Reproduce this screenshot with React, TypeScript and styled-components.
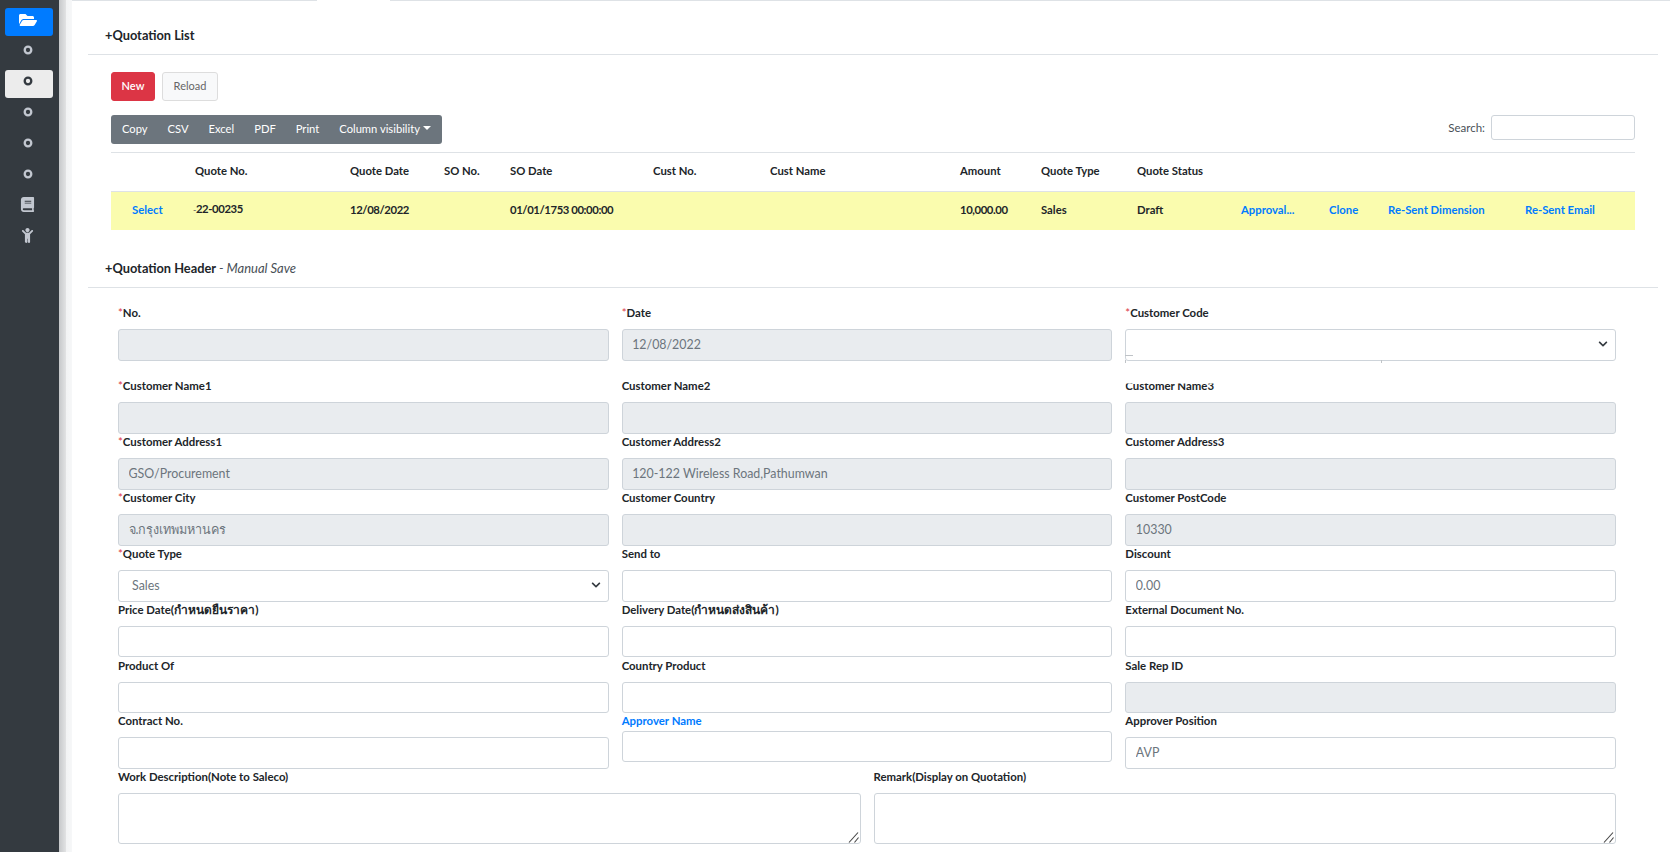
import React, { FC } from 'react';
import styled, { createGlobalStyle } from 'styled-components';
import { FaFolderOpen, FaBook, FaChild, FaChevronDown } from 'react-icons/fa';

const Global = createGlobalStyle`
  html, body {
    margin: 0;
    height: 100%;
    overflow: hidden;
    background: #fff;
    font-family: Lato, "Noto Sans", sans-serif;
    font-size: 12px;
    color: #212529;
  }
  * { box-sizing: border-box; }
`;

const Shell = styled.div`
  display: flex;
  height: 852px;
`;

const Sidebar = styled.nav`
  width: 59px;
  flex: none;
  background: #343a40;
  padding: 8px 6px 0 5px;
  display: flex;
  flex-direction: column;
  gap: 3px;
`;

const NavItem = styled.div<{ $state?: 'open' | 'active' }>`
  height: 28px;
  border-radius: 3px;
  padding: ${(p) => (p.$state === 'open' ? '3px' : '6px')} 3px 0 0;
  display: flex;
  justify-content: center;
  font-size: ${(p) => (p.$state === 'open' ? '18px' : '10px')};
  background: ${(p) =>
    p.$state === 'open' ? '#007bff' : p.$state === 'active' ? '#ececec' : 'transparent'};
  color: ${(p) =>
    p.$state === 'open' ? '#fff' : p.$state === 'active' ? '#343a40' : '#c2c7d0'};
`;

const BigIcon = styled.span`
  font-size: 15px;
  margin-top: -3px;
  line-height: 1;
`;

const RingIcon = styled.svg`
  width: 10px;
  height: 10px;
  fill: none;
  stroke: currentColor;
  stroke-width: 2.3;
`;

const Gutter = styled.div`
  width: 13px;
  flex: none;
  background: linear-gradient(to right, #c6c8ca 0, #e2e3e4 7px, #f2f3f4 7px, #f6f7f8 100%);
`;

const Main = styled.main`
  flex: 1;
  min-width: 0;
  padding-right: 12px;
`;

const TabLine = styled.div`
  display: flex;
  height: 1px;
  margin-right: -12px;
`;

const TabEdge = styled.div<{ $w?: number }>`
  background: #dee2e6;
  width: ${(p) => (p.$w ? `${p.$w}px` : 'auto')};
  flex: ${(p) => (p.$w ? 'none' : '1')};
`;

const TabGap = styled.div`
  width: 73px;
`;

const Section = styled.section`
  margin-left: 16px;
`;

const Heading = styled.h3<{ $after?: boolean }>`
  margin: ${(p) => (p.$after ? '4px' : '0')} 0 0;
  height: 54px;
  padding: 24px 0 0 17px;
  font-size: 12.8px;
  line-height: 20px;
  font-weight: 700;
  color: #212529;
  border-bottom: 1px solid #dee2e6;

  em {
    font-weight: 400;
    font-size: 13px;
    color: #495057;
  }
`;

const ListBody = styled.div`
  padding: 17px 23px 0;
`;

const ButtonRow = styled.div`
  display: flex;
  gap: 7px;
  margin-bottom: 14px;
`;

const Button = styled.button<{ $kind: 'danger' | 'light' }>`
  height: 29px;
  width: ${(p) => (p.$kind === 'danger' ? 44 : 56)}px;
  padding: 0 0 2px;
  border-radius: 3px;
  font: inherit;
  font-size: 11px;
  font-weight: ${(p) => (p.$kind === 'danger' ? 600 : 400)};
  border: 1px solid ${(p) => (p.$kind === 'danger' ? '#dc3545' : '#ddd')};
  background: ${(p) => (p.$kind === 'danger' ? '#dc3545' : '#f8f9fa')};
  color: ${(p) => (p.$kind === 'danger' ? '#fff' : '#666')};
`;

const Toolbar = styled.div`
  display: flex;
  justify-content: space-between;
  align-items: flex-start;
  height: 37px;
`;

const ExportGroup = styled.div`
  display: flex;
  height: 29px;
  border-radius: 3px;
  background: #6c757d;
  padding: 0 1px;
`;

const ExportButton = styled.button`
  border: 0;
  background: none;
  color: #fff;
  font: inherit;
  font-size: 11.2px;
  padding: 0 10px 2px;
  white-space: nowrap;
  display: flex;
  align-items: center;
  gap: 3px;
`;

const Caret = styled.span`
  border-top: 4px solid #fff;
  border-left: 4px solid transparent;
  border-right: 4px solid transparent;
  margin-top: -2px;
`;

const SearchBox = styled.label`
  display: flex;
  align-items: center;
  gap: 6px;
  color: #495057;
  font-size: 11.5px;
`;

const SearchInput = styled.input`
  width: 144px;
  height: 25px;
  border: 1px solid #ced4da;
  border-radius: 3px;
  background: #fff;
`;

const Table = styled.table`
  width: 100%;
  table-layout: fixed;
  border-collapse: collapse;
  border-top: 1px solid #dee2e6;
`;

const HeadCell = styled.th`
  height: 39px;
  padding: 0 0 3px;
  text-align: left;
  font-size: 11.3px;
  font-weight: 700;
  border-bottom: 1px solid #dee2e6;
  white-space: nowrap;
`;

const BodyRow = styled.tr`
  background: #fafcae;
`;

const Cell = styled.td<{ $link?: boolean; $pad?: number; $raise?: boolean; $num?: boolean }>`
  height: 38px;
  padding: 0 0 ${(p) => (p.$raise ? '5px' : '2px')} ${(p) => p.$pad ?? 0}px;
  font-size: 11.3px;
  font-weight: 700;
  white-space: nowrap;
  letter-spacing: ${(p) => (p.$num ? '-0.4px' : '0')};
  color: ${(p) => (p.$link ? '#007bff' : '#212529')};
`;

const Dash = styled.span`
  margin-left: -2px;
  color: #555;
  font-size: 9px;
  font-weight: 400;
`;

const Form = styled.div`
  padding: 17px 42px 0 30px;
  display: flex;
  flex-direction: column;
`;

const Row = styled.div<{ $h?: number; $gap?: number; $two?: boolean }>`
  display: grid;
  grid-template-columns: ${(p) => (p.$two ? '1fr 1fr' : 'repeat(3, 1fr)')};
  column-gap: 13px;
  height: ${(p) => p.$h ?? 56}px;
  margin-bottom: ${(p) => p.$gap ?? 0}px;
`;

const Field = styled.div`
  min-width: 0;
`;

const Label = styled.label<{ $tight?: boolean; $clip?: boolean; $blue?: boolean }>`
  display: block;
  height: 16px;
  line-height: 16px;
  margin-bottom: ${(p) => (p.$tight ? '2px' : '8px')};
  font-size: 11.4px;
  font-weight: 700;
  white-space: nowrap;
  color: ${(p) => (p.$blue ? '#007bff' : '#212529')};
  clip-path: ${(p) => (p.$clip ? 'inset(6px 0 0 0)' : 'none')};
`;

const ThaiText = styled.span`
  font-size: 12px;
`;

const Required = styled.span`
  color: #dc3545;
  font-weight: 400;
`;

const Input = styled.input<{ $short?: boolean; $off?: boolean; $thai?: boolean }>`
  display: block;
  width: 100%;
  height: ${(p) => (p.$short ? 31 : 32)}px;
  padding: 0 9.5px;
  border: 1px solid #ced4da;
  border-radius: 3px;
  font: inherit;
  font-size: ${(p) => (p.$thai ? 12.6 : 12.4)}px;
  color: #6c757d;
  background: ${(p) => (p.$off ? '#e9ecef' : '#fff')};
  outline: none;
`;

const SelectWrap = styled.div`
  position: relative;
`;

const Select = styled.select`
  display: block;
  width: 100%;
  height: 32px;
  padding: 0 0 0 13px;
  border: 1px solid #ced4da;
  border-radius: 3px;
  font: inherit;
  font-size: 12.4px;
  color: #6c757d;
  background: #fff;
  appearance: none;
  outline: none;
`;

const Chevron = styled.span`
  position: absolute;
  right: 8px;
  top: 10px;
  font-size: 10px;
  line-height: 1;
  color: #343a40;
`;

const Tick = styled.i<{ $x: number; $y: number; $w: number; $h: number }>`
  position: absolute;
  left: ${(p) => p.$x}px;
  top: ${(p) => p.$y}px;
  width: ${(p) => p.$w}px;
  height: ${(p) => p.$h}px;
  background: #bfc3c7;
`;

const NoteWrap = styled.div`
  position: relative;
`;

const TextArea = styled.textarea`
  display: block;
  width: 100%;
  height: 51px;
  border: 1px solid #ced4da;
  border-radius: 3px;
  outline: none;
  background: #fff;
  resize: none;
`;

const Grip = styled.svg`
  position: absolute;
  right: 2px;
  bottom: 1px;
  width: 11px;
  height: 11px;
  stroke: #444;
  stroke-width: 1.1;
`;

const columns = [84, 155, 94, 66, 143, 117, 190, 81, 96, 104, 88, 59, 137, 110];
const heads = ['', 'Quote No.', 'Quote Date', 'SO No.', 'SO Date', 'Cust No.', 'Cust Name', 'Amount', 'Quote Type', 'Quote Status', '', '', '', ''];

const Ring: FC = () => (
  <RingIcon viewBox="0 0 10 10">
    <circle cx="5" cy="5" r="3.3" />
  </RingIcon>
);

const NoteField: FC<{ label: string }> = ({ label }) => (
  <Field>
    <Label>{label}</Label>
    <NoteWrap>
      <TextArea />
      <Grip viewBox="0 0 11 11">
        <line x1="1" y1="10.5" x2="10" y2="0.5" />
        <line x1="6.5" y1="10.5" x2="10.5" y2="5.5" />
      </Grip>
    </NoteWrap>
  </Field>
);

const TextField: FC<{
  label: React.ReactNode;
  required?: boolean;
  value?: string;
  off?: boolean;
  short?: boolean;
  tight?: boolean;
  clip?: boolean;
  blue?: boolean;
  thai?: boolean;
}> = ({ label, required, value, off, short, tight, clip, blue, thai }) => (
  <Field>
    <Label $tight={tight} $clip={clip} $blue={blue}>
      {required && <Required>*</Required>}
      {label}
    </Label>
    <Input readOnly value={value ?? ''} $off={off} $short={short} $thai={thai} />
  </Field>
);

export default function App() {
  return (
    <>
      <Global />
      <Shell>
        <Sidebar>
          <NavItem $state="open"><FaFolderOpen /></NavItem>
          <NavItem><Ring /></NavItem>
          <NavItem $state="active"><Ring /></NavItem>
          <NavItem><Ring /></NavItem>
          <NavItem><Ring /></NavItem>
          <NavItem><Ring /></NavItem>
          <NavItem><BigIcon><FaBook /></BigIcon></NavItem>
          <NavItem><BigIcon><FaChild /></BigIcon></NavItem>
        </Sidebar>
        <Gutter />
        <Main>
          <TabLine>
            <TabEdge $w={245} />
            <TabGap />
            <TabEdge />
          </TabLine>
          <Section>
            <Heading>+Quotation List</Heading>
            <ListBody>
              <ButtonRow>
                <Button $kind="danger">New</Button>
                <Button $kind="light">Reload</Button>
              </ButtonRow>
              <Toolbar>
                <ExportGroup>
                  <ExportButton>Copy</ExportButton>
                  <ExportButton>CSV</ExportButton>
                  <ExportButton>Excel</ExportButton>
                  <ExportButton>PDF</ExportButton>
                  <ExportButton>Print</ExportButton>
                  <ExportButton>Column visibility <Caret /></ExportButton>
                </ExportGroup>
                <SearchBox>
                  Search:
                  <SearchInput />
                </SearchBox>
              </Toolbar>
              <Table>
                <colgroup>
                  {columns.map((w, i) => (
                    <col key={i} style={{ width: w }} />
                  ))}
                </colgroup>
                <thead>
                  <tr>
                    {heads.map((h, i) => (
                      <HeadCell key={i}>{h}</HeadCell>
                    ))}
                  </tr>
                </thead>
                <tbody>
                  <BodyRow>
                    <Cell $link $pad={21}>Select</Cell>
                    <Cell $raise $num><Dash>-</Dash>22-00235</Cell>
                    <Cell $num>12/08/2022</Cell>
                    <Cell />
                    <Cell $num>01/01/1753 00:00:00</Cell>
                    <Cell />
                    <Cell />
                    <Cell $num>10,000.00</Cell>
                    <Cell>Sales</Cell>
                    <Cell>Draft</Cell>
                    <Cell $link>Approval...</Cell>
                    <Cell $link>Clone</Cell>
                    <Cell $link>Re-Sent Dimension</Cell>
                    <Cell $link>Re-Sent Email</Cell>
                  </BodyRow>
                </tbody>
              </Table>
            </ListBody>
          </Section>
          <Section>
            <Heading $after>
              +Quotation Header <em>- <i>Manual Save</i></em>
            </Heading>
            <Form>
              <Row $gap={17}>
                <TextField label="No." required off />
                <TextField label="Date" required off value="12/08/2022" />
                <Field>
                  <Label><Required>*</Required>Customer Code</Label>
                  <SelectWrap>
                    <Select />
                    <Chevron><FaChevronDown /></Chevron>
                    <Tick $x={0} $y={26} $w={8} $h={1} />
                    <Tick $x={0} $y={31} $w={1} $h={3} />
                    <Tick $x={256} $y={31} $w={1} $h={3} />
                  </SelectWrap>
                </Field>
              </Row>
              <Row>
                <TextField label="Customer Name1" required off />
                <TextField label="Customer Name2" off />
                <TextField label="Customer Name3" off clip />
              </Row>
              <Row>
                <TextField label="Customer Address1" required off value="GSO/Procurement" />
                <TextField label="Customer Address2" off value="120-122 Wireless Road,Pathumwan" />
                <TextField label="Customer Address3" off />
              </Row>
              <Row>
                <TextField label="Customer City" required off thai value="จ.กรุงเทพมหานคร" />
                <TextField label="Customer Country" off />
                <TextField label="Customer PostCode" off value="10330" />
              </Row>
              <Row>
                <Field>
                  <Label><Required>*</Required>Quote Type</Label>
                  <SelectWrap>
                    <Select defaultValue="Sales">
                      <option>Sales</option>
                    </Select>
                    <Chevron><FaChevronDown /></Chevron>
                  </SelectWrap>
                </Field>
                <TextField label="Send to" />
                <TextField label="Discount" value="0.00" />
              </Row>
              <Row>
                <TextField label={<>Price Date<ThaiText>(กำหนดยืนราคา)</ThaiText></>} short />
                <TextField label={<>Delivery Date<ThaiText>(กำหนดส่งสินค้า)</ThaiText></>} short />
                <TextField label="External Document No." short />
              </Row>
              <Row $h={55}>
                <TextField label="Product Of" short />
                <TextField label="Country Product" short />
                <TextField label="Sale Rep ID" short off />
              </Row>
              <Row>
                <TextField label="Contract No." />
                <TextField label="Approver Name" tight blue short />
                <TextField label="Approver Position" value="AVP" />
              </Row>
              <Row $two $h={75}>
                <NoteField label="Work Description(Note to Saleco)" />
                <NoteField label="Remark(Display on Quotation)" />
              </Row>
            </Form>
          </Section>
        </Main>
      </Shell>
    </>
  );
}
